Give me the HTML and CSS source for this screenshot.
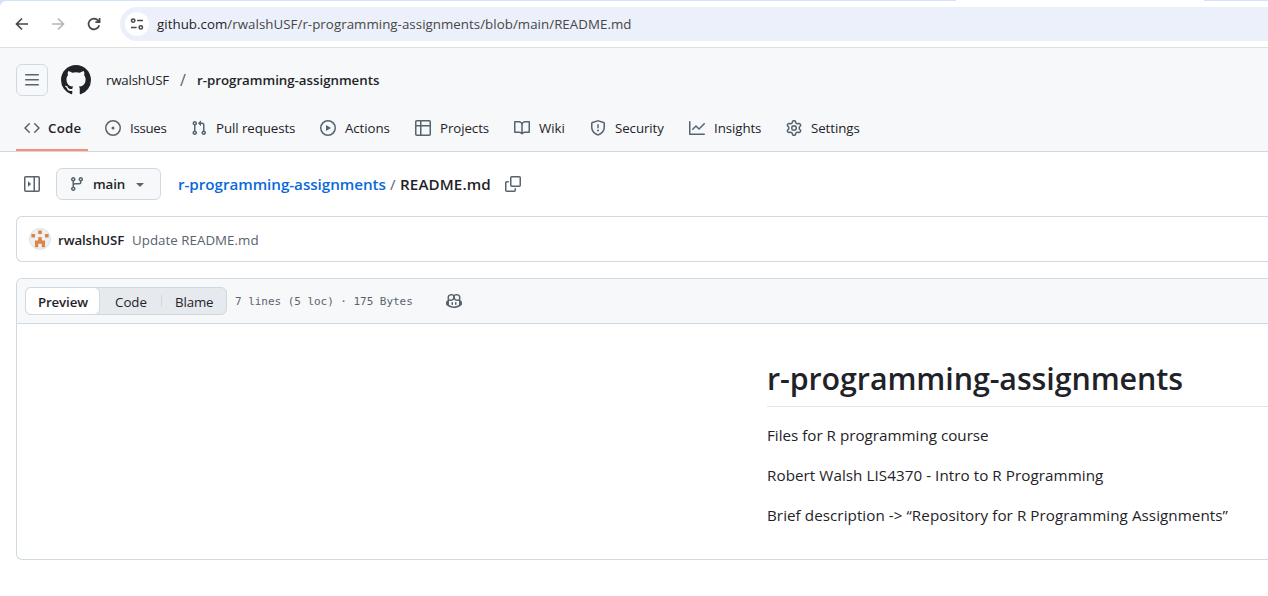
FILE: index.html
```html
<!DOCTYPE html>
<html lang="en">
<head>
<meta charset="utf-8">
<title>r-programming-assignments/README.md</title>
<link rel="stylesheet" href="styles.css">
</head>
<body>
<div class="window">
  <div class="tabstrip"><span class="tab-edge"></span></div>
  <div class="toolbar-wrap"><div class="toolbar">
    <div class="nav-buttons">
      <svg class="tool" viewBox="0 0 16 16"><path d="M14 8H2.6M8 2.5 2.5 8 8 13.5"/></svg>
      <svg class="tool disabled" viewBox="0 0 16 16"><path d="M2 8h11.4M8 2.5 13.5 8 8 13.5"/></svg>
      <svg class="tool" viewBox="0 0 16 16"><path d="M13.2 9.2A5.4 5.4 0 1 1 12 4.4l1.3 1.4M13.6 2v4.2H9.4"/></svg>
    </div>
    <div class="omnibox">
      <span class="site-info"><svg class="tune" viewBox="0 0 14 14"><circle cx="3.2" cy="3.6" r="1.7"/><path d="M7.2 3.6H13M1 10.4h5.6"/><circle cx="10.8" cy="10.4" r="1.7"/></svg></span>
      <span class="url"><b>github.com</b>/rwalshUSF/r-programming-assignments/blob/main/README.md</span>
    </div>
  </div></div>
  <header class="header">
    <div class="context">
      <button class="menu-button"><svg class="icon" viewBox="0 0 16 16"><path d="M1 2.75A.75.75 0 0 1 1.75 2h12.5a.75.75 0 0 1 0 1.5H1.75A.75.75 0 0 1 1 2.75Zm0 5A.75.75 0 0 1 1.75 7h12.5a.75.75 0 0 1 0 1.5H1.75A.75.75 0 0 1 1 7.75ZM1.75 12h12.5a.75.75 0 0 1 0 1.5H1.75a.75.75 0 0 1 0-1.5Z"/></svg></button>
      <svg class="logo" viewBox="0 0 16 16"><path d="M8 0c4.42 0 8 3.58 8 8a8.013 8.013 0 0 1-5.45 7.59c-.4.08-.55-.17-.55-.38 0-.27.01-1.13.01-2.2 0-.75-.25-1.23-.54-1.48 1.78-.2 3.65-.88 3.65-3.95 0-.88-.31-1.59-.82-2.15.08-.2.36-1.02-.08-2.12 0 0-.67-.22-2.2.82-.64-.18-1.32-.27-2-.27-.68 0-1.36.09-2 .27-1.53-1.03-2.2-.82-2.2-.82-.44 1.1-.16 1.92-.08 2.12-.51.56-.82 1.28-.82 2.15 0 3.06 1.86 3.75 3.64 3.95-.23.2-.44.55-.51 1.07-.46.21-1.61.55-2.33-.66-.15-.24-.6-.83-1.23-.82-.67.01-.27.38.01.53.34.19.73.9.82 1.13.16.45.68 1.31 2.69.94 0 .67.01 1.3.01 1.49 0 .21-.15.45-.55.38A7.995 7.995 0 0 1 0 8c0-4.42 3.58-8 8-8Z"/></svg>
      <span class="owner">rwalshUSF</span>
      <span class="sep">/</span>
      <span class="repo">r-programming-assignments</span>
    </div>
    <nav class="tabs">
      <a class="tab selected"><svg class="icon" viewBox="0 0 16 16"><path d="m11.28 3.22 4.25 4.25a.75.75 0 0 1 0 1.06l-4.25 4.25a.749.749 0 0 1-1.275-.326.749.749 0 0 1 .215-.734L13.94 8l-3.72-3.72a.749.749 0 0 1 .326-1.275.749.749 0 0 1 .734.215Zm-6.56 0a.751.751 0 0 1 1.042.018.751.751 0 0 1 .018 1.042L2.06 8l3.72 3.72a.749.749 0 0 1-.326 1.275.749.749 0 0 1-.734-.215L.47 8.53a.75.75 0 0 1 0-1.06Z"/></svg><span>Code</span></a>
      <a class="tab tight"><svg class="icon" viewBox="0 0 16 16"><path d="M8 9.5a1.5 1.5 0 1 0 0-3 1.5 1.5 0 0 0 0 3Z"/><path d="M8 0a8 8 0 1 1 0 16A8 8 0 0 1 8 0ZM1.5 8a6.5 6.5 0 1 0 13 0 6.5 6.5 0 0 0-13 0Z"/></svg><span>Issues</span></a>
      <a class="tab"><svg class="icon" viewBox="0 0 16 16"><path d="M1.5 3.25a2.25 2.25 0 1 1 3 2.122v5.256a2.251 2.251 0 1 1-1.5 0V5.372A2.25 2.25 0 0 1 1.5 3.25Zm5.677-.177L9.573.677A.25.25 0 0 1 10 .854V2.5h1A2.5 2.5 0 0 1 13.5 5v5.628a2.251 2.251 0 1 1-1.5 0V5a1 1 0 0 0-1-1h-1v1.646a.25.25 0 0 1-.427.177L7.177 3.427a.25.25 0 0 1 0-.354ZM3.75 2.5a.75.75 0 1 0 0 1.5.75.75 0 0 0 0-1.5Zm0 9.5a.75.75 0 1 0 0 1.5.75.75 0 0 0 0-1.5Zm8.25.75a.75.75 0 1 0 1.5 0 .75.75 0 0 0-1.5 0Z"/></svg><span>Pull requests</span></a>
      <a class="tab"><svg class="icon" viewBox="0 0 16 16"><path d="M8 0a8 8 0 1 1 0 16A8 8 0 0 1 8 0ZM1.5 8a6.5 6.5 0 1 0 13 0 6.5 6.5 0 0 0-13 0Zm4.879-2.773 4.264 2.559a.25.25 0 0 1 0 .428l-4.264 2.559A.25.25 0 0 1 6 10.559V5.442a.25.25 0 0 1 .379-.215Z"/></svg><span>Actions</span></a>
      <a class="tab"><svg class="icon" viewBox="0 0 16 16"><path d="M0 1.75C0 .784.784 0 1.75 0h12.5C15.216 0 16 .784 16 1.75v12.5A1.75 1.75 0 0 1 14.25 16H1.75A1.75 1.75 0 0 1 0 14.25ZM6.5 6.5v8h7.75a.25.25 0 0 0 .25-.25V6.5Zm8-1.5V1.75a.25.25 0 0 0-.25-.25H6.5V5Zm-13 1.5v7.75c0 .138.112.25.25.25H5v-8ZM5 5V1.5H1.75a.25.25 0 0 0-.25.25V5Z"/></svg><span>Projects</span></a>
      <a class="tab"><svg class="icon" viewBox="0 0 16 16"><path d="M0 1.75A.75.75 0 0 1 .75 1h4.253c1.227 0 2.317.59 3 1.501A3.743 3.743 0 0 1 11.006 1h4.245a.75.75 0 0 1 .75.75v10.5a.75.75 0 0 1-.75.75h-4.507a2.25 2.25 0 0 0-1.591.659l-.622.621a.75.75 0 0 1-1.06 0l-.622-.621A2.25 2.25 0 0 0 5.258 13H.75a.75.75 0 0 1-.75-.75Zm7.251 10.324.004-5.073-.002-2.253A2.25 2.25 0 0 0 5.003 2.5H1.5v9h3.757a3.75 3.75 0 0 1 1.994.574ZM8.755 4.75l-.004 7.322a3.752 3.752 0 0 1 1.992-.572H14.5v-9h-3.495a2.25 2.25 0 0 0-2.25 2.25Z"/></svg><span>Wiki</span></a>
      <a class="tab"><svg class="icon" viewBox="0 0 16 16"><path d="M7.467.133a1.748 1.748 0 0 1 1.066 0l5.25 1.68A1.75 1.75 0 0 1 15 3.48V7c0 1.566-.32 3.182-1.303 4.682-.983 1.498-2.585 2.813-5.032 3.855a1.697 1.697 0 0 1-1.33 0c-2.447-1.042-4.049-2.357-5.032-3.855C1.32 10.182 1 8.566 1 7V3.48a1.75 1.75 0 0 1 1.217-1.667Zm.61 1.429a.25.25 0 0 0-.153 0l-5.25 1.68a.25.25 0 0 0-.174.238V7c0 1.358.275 2.666 1.057 3.86.784 1.194 2.121 2.34 4.366 3.297a.196.196 0 0 0 .154 0c2.245-.956 3.582-2.104 4.366-3.298C13.225 9.666 13.5 8.36 13.5 7V3.48a.251.251 0 0 0-.174-.237l-5.25-1.68ZM8.75 4.75v3a.75.75 0 0 1-1.5 0v-3a.75.75 0 0 1 1.5 0ZM9 10.5a1 1 0 1 1-2 0 1 1 0 0 1 2 0Z"/></svg><span>Security</span></a>
      <a class="tab"><svg class="icon" viewBox="0 0 16 16"><path d="M1.5 1.75V13.5h13.75a.75.75 0 0 1 0 1.5H.75a.75.75 0 0 1-.75-.75V1.75a.75.75 0 0 1 1.5 0Zm14.28 2.53-5.25 5.25a.75.75 0 0 1-1.06 0L7 7.06 4.28 9.78a.751.751 0 0 1-1.042-.018.751.751 0 0 1-.018-1.042l3.25-3.25a.75.75 0 0 1 1.06 0L10 7.94l4.72-4.72a.751.751 0 0 1 1.042.018.751.751 0 0 1 .018 1.042Z"/></svg><span>Insights</span></a>
      <a class="tab"><svg class="icon" viewBox="0 0 16 16"><path d="M8 0a8.2 8.2 0 0 1 .701.031C9.444.095 9.99.645 10.16 1.29l.288 1.107c.018.066.079.158.212.224.231.114.454.243.668.386.123.082.233.09.299.071l1.103-.303c.644-.176 1.392.021 1.82.63.27.385.506.792.704 1.218.315.675.111 1.422-.364 1.891l-.814.806c-.049.048-.098.147-.088.294.016.257.016.515 0 .772-.01.147.038.246.088.294l.814.806c.475.469.679 1.216.364 1.891a7.977 7.977 0 0 1-.704 1.217c-.428.61-1.176.807-1.82.63l-1.102-.302c-.067-.019-.177-.011-.3.071a5.909 5.909 0 0 1-.668.386c-.133.066-.194.158-.211.224l-.29 1.106c-.168.646-.715 1.196-1.458 1.26a8.006 8.006 0 0 1-1.402 0c-.743-.064-1.289-.614-1.458-1.26l-.289-1.106c-.018-.066-.079-.158-.212-.224a5.738 5.738 0 0 1-.668-.386c-.123-.082-.233-.09-.299-.071l-1.103.303c-.644.176-1.392-.021-1.82-.63a8.12 8.12 0 0 1-.704-1.218c-.315-.675-.111-1.422.363-1.891l.815-.806c.05-.048.098-.147.088-.294a6.214 6.214 0 0 1 0-.772c.01-.147-.038-.246-.088-.294l-.815-.806C.635 6.045.431 5.298.746 4.623a7.92 7.92 0 0 1 .704-1.217c.428-.61 1.176-.807 1.82-.63l1.102.302c.067.019.177.011.3-.071.214-.143.437-.272.668-.386.133-.066.194-.158.211-.224l.29-1.106C6.009.645 6.556.095 7.299.03 7.53.01 7.764 0 8 0Zm-.571 1.525c-.036.003-.108.036-.137.146l-.289 1.105c-.147.561-.549.967-.998 1.189-.173.086-.34.183-.5.29-.417.278-.97.423-1.529.27l-1.103-.303c-.109-.03-.175.016-.195.045-.22.312-.412.644-.573.99-.014.031-.021.11.059.19l.815.806c.411.406.562.957.53 1.456a4.709 4.709 0 0 0 0 .582c.032.499-.119 1.05-.53 1.456l-.815.806c-.081.08-.073.159-.059.19.162.346.353.677.573.989.02.03.085.076.195.046l1.102-.303c.56-.153 1.113-.008 1.53.27.161.107.328.204.501.29.447.222.85.629.997 1.189l.289 1.105c.029.109.101.143.137.146a6.6 6.6 0 0 0 1.142 0c.036-.003.108-.036.137-.146l.289-1.105c.147-.561.549-.967.998-1.189.173-.086.34-.183.5-.29.417-.278.97-.423 1.529-.27l1.103.303c.109.029.175-.016.195-.045.22-.313.411-.644.573-.99.014-.031.021-.11-.059-.19l-.815-.806c-.411-.406-.562-.957-.53-1.456a4.709 4.709 0 0 0 0-.582c-.032-.499.119-1.05.53-1.456l.815-.806c.081-.08.073-.159.059-.19a6.464 6.464 0 0 0-.573-.989c-.02-.03-.085-.076-.195-.046l-1.102.303c-.56.153-1.113.008-1.53-.27a4.44 4.44 0 0 0-.501-.29c-.447-.222-.85-.629-.997-1.189l-.289-1.105c-.029-.11-.101-.143-.137-.146a6.6 6.6 0 0 0-1.142 0ZM11 8a3 3 0 1 1-6 0 3 3 0 0 1 6 0ZM9.5 8a1.5 1.5 0 1 0-3.001.001A1.5 1.5 0 0 0 9.5 8Z"/></svg><span>Settings</span></a>
    </nav>
  </header>
  <main class="main">
    <div class="pathbar">
      <svg class="icon" viewBox="0 0 16 16"><path d="M6.823 7.823a.25.25 0 0 1 0 .354l-2.396 2.396A.25.25 0 0 1 4 10.396V5.604a.25.25 0 0 1 .427-.177Z"/><path d="M1.75 0h12.5C15.216 0 16 .784 16 1.75v12.5A1.75 1.75 0 0 1 14.25 16H1.75A1.75 1.75 0 0 1 0 14.25V1.75C0 .784.784 0 1.75 0ZM1.5 1.75v12.5c0 .138.112.25.25.25H9.5v-13H1.75a.25.25 0 0 0-.25.25ZM11 14.5h3.25a.25.25 0 0 0 .25-.25V1.75a.25.25 0 0 0-.25-.25H11Z"/></svg>
      <button class="branch"><svg class="icon" viewBox="0 0 16 16"><path d="M9.5 3.25a2.25 2.25 0 1 1 3 2.122V6A2.5 2.5 0 0 1 10 8.5H6a1 1 0 0 0-1 1v1.128a2.251 2.251 0 1 1-1.5 0V5.372a2.25 2.25 0 1 1 1.5 0v1.836A2.493 2.493 0 0 1 6 7h4a1 1 0 0 0 1-1v-.628A2.25 2.25 0 0 1 9.5 3.25Zm-6 0a.75.75 0 1 0 1.5 0 .75.75 0 0 0-1.5 0Zm8.25-.75a.75.75 0 1 0 0 1.5.75.75 0 0 0 0-1.5ZM4.25 12a.75.75 0 1 0 0 1.5.75.75 0 0 0 0-1.5Z"/></svg><span class="branch-name">main</span><svg class="icon" viewBox="0 0 16 16"><path d="m4.427 7.427 3.396 3.396a.25.25 0 0 0 .354 0l3.396-3.396A.25.25 0 0 0 11.396 7H4.604a.25.25 0 0 0-.177.427Z"/></svg></button>
      <a class="crumb-repo">r-programming-assignments</a>
      <span class="crumb-sep">/</span>
      <span class="crumb-file">README.md</span>
      <svg class="icon" viewBox="0 0 16 16"><path d="M0 6.75C0 5.784.784 5 1.75 5h1.5a.75.75 0 0 1 0 1.5h-1.5a.25.25 0 0 0-.25.25v7.5c0 .138.112.25.25.25h7.5a.25.25 0 0 0 .25-.25v-1.5a.75.75 0 0 1 1.5 0v1.5A1.75 1.75 0 0 1 9.25 16h-7.5A1.75 1.75 0 0 1 0 14.25Z"/><path d="M5 1.75C5 .784 5.784 0 6.75 0h7.5C15.216 0 16 .784 16 1.75v7.5A1.75 1.75 0 0 1 14.25 11h-7.5A1.75 1.75 0 0 1 5 9.25Zm1.75-.25a.25.25 0 0 0-.25.25v7.5c0 .138.112.25.25.25h7.5a.25.25 0 0 0 .25-.25v-7.5a.25.25 0 0 0-.25-.25Z"/></svg>
    </div>
    <section class="commit">
      <svg class="avatar" viewBox="0 0 22 22"><circle class="avatar-bg" cx="11" cy="11" r="10.5"/><path class="avatar-fg" d="M9.2 2.4h3.6V6H9.2zM2.4 6H6v3.4H2.4zM16 6h3.6v3.4H16zM9.2 9.2h3.6v3.3H16v6.7h-3.2v-3.4H9.2v3.4H6v-6.7h3.2z"/></svg>
      <span class="author">rwalshUSF</span>
      <span class="message">Update README.md</span>
    </section>
    <section class="file">
      <div class="file-head">
        <div class="segmented"><span class="seg active">Preview</span><span class="seg code">Code</span><span class="divider"></span><span class="seg blame">Blame</span></div>
        <span class="stats">7 lines (5 loc) · 175 Bytes</span>
        <svg class="icon" viewBox="0 0 16 16"><path d="M7.998 15.035c-4.562 0-7.873-2.914-7.998-3.749V9.338c.085-.628.677-1.686 1.588-2.065.013-.07.024-.143.036-.218.029-.183.06-.384.126-.612-.201-.508-.254-1.084-.254-1.656 0-.87.128-1.769.693-2.484.579-.733 1.494-1.124 2.724-1.261 1.206-.134 2.262.034 2.944.765.05.053.096.108.139.165.044-.057.094-.112.143-.165.682-.731 1.738-.899 2.944-.765 1.23.137 2.145.528 2.724 1.261.566.715.693 1.614.693 2.484 0 .572-.053 1.148-.254 1.656.066.228.098.429.126.612.012.076.024.148.037.218.924.385 1.522 1.471 1.591 2.095v1.872c0 .766-3.351 3.795-8.002 3.795Zm0-1.485c2.28 0 4.584-1.11 5.002-1.433V7.862l-.023-.116c-.49.21-1.075.291-1.727.291-1.146 0-2.059-.327-2.71-.991A3.222 3.222 0 0 1 8 6.303a3.24 3.24 0 0 1-.544.743c-.65.664-1.563.991-2.71.991-.652 0-1.236-.081-1.727-.291l-.023.116v4.255c.419.323 2.722 1.433 5.002 1.433ZM6.762 2.83c-.193-.206-.637-.413-1.682-.297-1.019.113-1.479.404-1.713.7-.247.312-.369.789-.369 1.554 0 .793.129 1.171.308 1.371.162.181.519.379 1.442.379.853 0 1.339-.235 1.638-.54.315-.322.527-.827.617-1.553.117-.935-.037-1.395-.241-1.614Zm4.155-.297c-1.044-.116-1.488.091-1.681.297-.204.219-.359.679-.242 1.614.091.726.303 1.231.618 1.553.299.305.784.54 1.638.54.922 0 1.28-.198 1.442-.379.179-.2.308-.578.308-1.371 0-.765-.123-1.242-.37-1.554-.233-.296-.693-.587-1.713-.7Z"/><path d="M6.25 9.037a.75.75 0 0 1 .75.75v1.501a.75.75 0 0 1-1.5 0V9.787a.75.75 0 0 1 .75-.75Zm4.25.75v1.501a.75.75 0 0 1-1.5 0V9.787a.75.75 0 0 1 1.5 0Z"/></svg>
      </div>
      <article class="readme">
        <h1 class="title">r-programming-assignments</h1>
        <p class="para">Files for R programming course</p>
        <p class="para wide">Robert Walsh LIS4370 - Intro to R Programming</p>
        <p class="para wide">Brief description -&gt; “Repository for R Programming Assignments”</p>
      </article>
    </section>
  </main>
</div>
</body>
</html>
```
FILE: styles.css
```css
* { box-sizing: border-box; }
body { margin: 0; background: #fff; color: #1f2328; font-family: "Open Sans", "Noto Sans", sans-serif; font-size: 13.3px; line-height: 20px; white-space: nowrap; overflow: hidden; }
button { font: inherit; color: inherit; padding: 0; }
.window { width: 1268px; height: 596px; overflow: hidden; }
.icon { width: 16px; height: 16px; flex: none; fill: #59636e; display: block; }

/* browser chrome */
.tabstrip { height: 1px; background: #d3e3fd; display: flex; padding-left: 956px; }
.tab-edge { width: 248px; height: 1px; background: #fff; }
.toolbar-wrap { background: #d3e3fd; }
.toolbar { height: 47px; display: flex; align-items: center; padding-left: 14px; border-bottom: 1px solid #dfdfe0; background: #fff; border-top-left-radius: 6px; }
.nav-buttons { display: flex; gap: 20px; width: 106px; }
.tool { width: 16px; height: 16px; fill: none; stroke: #474747; stroke-width: 1.7; }
.disabled { stroke: #b5b5b5; }
.omnibox { flex: 1; height: 34px; border-radius: 17px 0 0 17px; background: #ebf0fa; display: flex; align-items: center; padding-left: 5px; }
.site-info { width: 24px; height: 24px; border-radius: 50%; background: #fff; display: flex; align-items: center; justify-content: center; }
.tune { width: 14px; height: 14px; fill: none; stroke: #474747; stroke-width: 1.5; }
.url { margin-left: 8px; color: #474747; letter-spacing: 0.042px; }
.url b { font-weight: 400; color: #1f1f1f; }

/* repository header */
.header { height: 104px; background: #f6f8fa; border-bottom: 1px solid #d1d9e0; }
.context { height: 64px; display: flex; align-items: center; padding-left: 16px; }
.menu-button { width: 32px; height: 32px; border: 1px solid #d1d9e0; border-radius: 6px; background: transparent; display: flex; align-items: center; justify-content: center; }
.logo { width: 30px; height: 30px; margin-left: 13px; fill: #1f2328; }
.owner { margin-left: 15px; width: 74px; letter-spacing: -0.2px; }
.sep { width: 17px; color: #59636e; font-size: 16px; }
.repo { font-weight: 600; letter-spacing: -0.02px; }
.tabs { height: 39px; display: grid; grid-template-columns: 81px 86px 129px 95px 99px 76px 99px 97px 90px; padding-left: 16px; }
.tab { height: 39px; display: flex; padding: 8px 0 0 8px; line-height: 16px; gap: 8px; letter-spacing: -0.08px; }
.tab span { margin-left: 1px; }
.tight { letter-spacing: -0.3px; }
.selected { width: 72px; border-bottom: 2px solid #fd8c73; font-weight: 600; letter-spacing: 0.2px; }
.selected span { margin-left: 0; }

/* path bar */
.main { padding: 16px 0 0 16px; }
.pathbar { height: 32px; display: flex; align-items: center; padding-left: 8px; font-size: 15.2px; }
.branch { margin-left: 16px; width: 105px; height: 32px; border: 1px solid #d1d9e0; border-radius: 6px; background: #f6f8fa; display: flex; align-items: center; padding-left: 12px; font-size: 13.3px; font-weight: 600; }
.branch-name { width: 39px; margin-left: 8px; text-align: left; letter-spacing: -0.1px; }
.crumb-repo { margin-left: 17px; width: 212px; color: #0969da; font-weight: 600; letter-spacing: -0.04px; }
.crumb-sep { width: 10px; color: #59636e; }
.crumb-file { width: 105px; font-weight: 600; letter-spacing: 0.1px; }

/* latest commit */
.commit { margin-top: 16px; height: 46px; border: 1px solid #d1d9e0; border-right: 0; border-radius: 6px 0 0 6px; display: flex; align-items: center; padding-left: 12px; }
.avatar { width: 22px; height: 22px; }
.avatar-bg { fill: #f0f0f0; stroke: #dfe1e3; }
.avatar-fg { fill: #d98548; }
.author { width: 74px; margin-left: 7px; padding-top: 1px; font-weight: 600; letter-spacing: -0.1px; }
.message { padding-top: 1px; color: #59636e; letter-spacing: 0.04px; }

/* file view */
.file { margin-top: 16px; height: 282px; border: 1px solid #d1d9e0; border-right: 0; border-radius: 6px 0 0 6px; overflow: hidden; }
.file-head { height: 45px; background: #f6f8fa; border-bottom: 1px solid #d1d9e0; display: flex; align-items: center; padding-left: 8px; }
.segmented { width: 202px; height: 28px; display: flex; border: 1px solid #d1d9e0; border-radius: 6px; background: #e6eaef; line-height: 28px; }
.seg { height: 26px; }
.active { width: 75px; margin: -1px 0 0 -1px; height: 28px; padding-left: 12px; background: #fff; border: 1px solid #d1d9e0; border-radius: 6px; font-weight: 600; letter-spacing: -0.15px; }
.code { width: 61px; padding-left: 15px; }
.divider { width: 1px; height: 12px; margin-top: 7px; background: #d1d9e0; }
.blame { padding-left: 13px; letter-spacing: -0.15px; }
.stats { width: 211px; margin-left: 8px; padding-top: 1px; font: 11px/18px "DejaVu Sans Mono", monospace; letter-spacing: -0.04px; color: #59636e; }
.readme { margin-left: 750px; padding-top: 32px; font-size: 15.2px; line-height: 24px; }
.title { margin: 0 0 16px; height: 51px; border-bottom: 1px solid #d1d9e0b3; font-size: 30.4px; line-height: 45px; font-weight: 600; letter-spacing: -0.08px; }
.para { margin: 0 0 16px; }
.wide { letter-spacing: 0.06px; }
```
